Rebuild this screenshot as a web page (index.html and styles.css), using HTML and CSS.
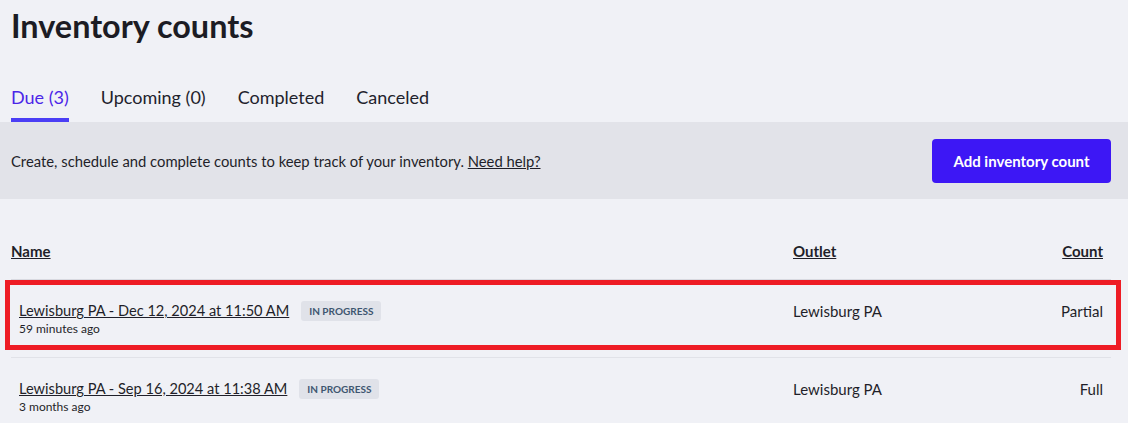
FILE: index.html
```html
<!DOCTYPE html>
<html lang="en">
<head>
<meta charset="utf-8">
<title>Inventory counts</title>
<link rel="stylesheet" href="styles.css">
</head>
<body>
<div class="page">
  <header class="head">
    <h1 class="title">Inventory counts</h1>
    <nav class="tabs">
      <a class="tab tab-active">Due (3)</a>
      <a class="tab">Upcoming (0)</a>
      <a class="tab">Completed</a>
      <a class="tab">Canceled</a>
    </nav>
  </header>
  <section class="band">
    <p class="band-text">Create, schedule and complete counts to keep track of your inventory. <a class="help">Need help?</a></p>
    <button class="btn">Add inventory count</button>
  </section>
  <section class="table">
    <div class="thead">
      <span class="th th-name">Name</span>
      <span class="th">Outlet</span>
      <span class="th th-count">Count</span>
    </div>
    <div class="row row-marked">
      <div class="cell-name">
        <div class="name-line"><a class="name-link">Lewisburg PA - Dec 12, 2024 at 11:50 AM</a><span class="badge">IN PROGRESS</span></div>
        <div class="ago">59 minutes ago</div>
      </div>
      <div class="cell">Lewisburg PA</div>
      <div class="cell cell-count">Partial</div>
    </div>
    <div class="row">
      <div class="cell-name">
        <div class="name-line"><a class="name-link">Lewisburg PA - Sep 16, 2024 at 11:38 AM</a><span class="badge">IN PROGRESS</span></div>
        <div class="ago">3 months ago</div>
      </div>
      <div class="cell">Lewisburg PA</div>
      <div class="cell cell-count">Full</div>
    </div>
  </section>
</div>
</body>
</html>
```

FILE: styles.css
```css
*, *::before, *::after { box-sizing: border-box; }
html, body { margin: 0; padding: 0; }
body {
  background: #f0f1f6;
  font-family: Lato, "Noto Sans", sans-serif;
  color: #1f1f29;
  overflow: hidden;
}
.page { width: 1128px; }
.head { padding: 0 17px 0 11px; }
.title {
  margin: 0;
  padding-top: 4px;
  font-size: 32.4px;
  line-height: 44px;
  font-weight: 700;
  color: #1c1c24;
}
.tabs {
  display: flex;
  gap: 32px;
  margin-top: 38px;
}
.tab {
  font-size: 18px;
  line-height: 22px;
  padding-bottom: 10px;
  border-bottom: 4px solid transparent;
  color: #22222c;
  cursor: pointer;
}
.tab-active {
  color: #4b25e8;
  border-bottom-color: #4b3ef5;
}
.band {
  background: #e2e3e9;
  height: 77px;
  padding: 0 17px 0 11px;
  display: flex;
  align-items: center;
  justify-content: space-between;
}
.band-text {
  margin: 0;
  font-size: 14.8px;
  color: #1f1f29;
}
.help { text-decoration: underline; color: #1f1f29; }
.btn {
  background: #3d17f5;
  color: #fff;
  border: none;
  border-radius: 4px;
  height: 44px;
  width: 179px;
  font-family: inherit;
  font-size: 15px;
  font-weight: 700;
}
.table {
  padding: 0 17px 0 11px;
  margin-top: 40px;
}
.thead, .row {
  display: grid;
  grid-template-columns: 782px 1fr auto;
  align-items: start;
  padding-right: 8px;
}
.thead {
  height: 41px;
  border-bottom: 1px solid #d8d9e0;
}
.th {
  font-size: 15px;
  font-weight: 700;
  text-decoration: underline;
  line-height: 24px;
}
.th-count, .cell-count { text-align: right; }
.row {
  height: 78px;
  padding-top: 21px;
  border-bottom: 1px solid #e1e2e8;
  position: relative;
}
.row:last-child { border-bottom: none; }
.row-marked::after {
  content: "";
  position: absolute;
  left: -6px;
  right: -10px;
  top: 0;
  height: 70px;
  border: 5px solid #ee1c25;
  pointer-events: none;
}
.cell-name { padding-left: 8px; }
.name-line {
  display: flex;
  align-items: center;
  gap: 12px;
}
.name-link {
  font-size: 14.6px;
  text-decoration: underline;
  color: #1f1f29;
  line-height: 20px;
}
.badge {
  background: #e0e2e9;
  color: #3e5670;
  font-size: 10px;
  font-weight: 700;
  border-radius: 3px;
  padding: 0 8px;
  line-height: 20px;
  height: 20px;
}
.ago {
  font-size: 12px;
  line-height: 16px;
  color: #1f1f29;
}
.cell {
  font-size: 15px;
  line-height: 20px;
}
```
